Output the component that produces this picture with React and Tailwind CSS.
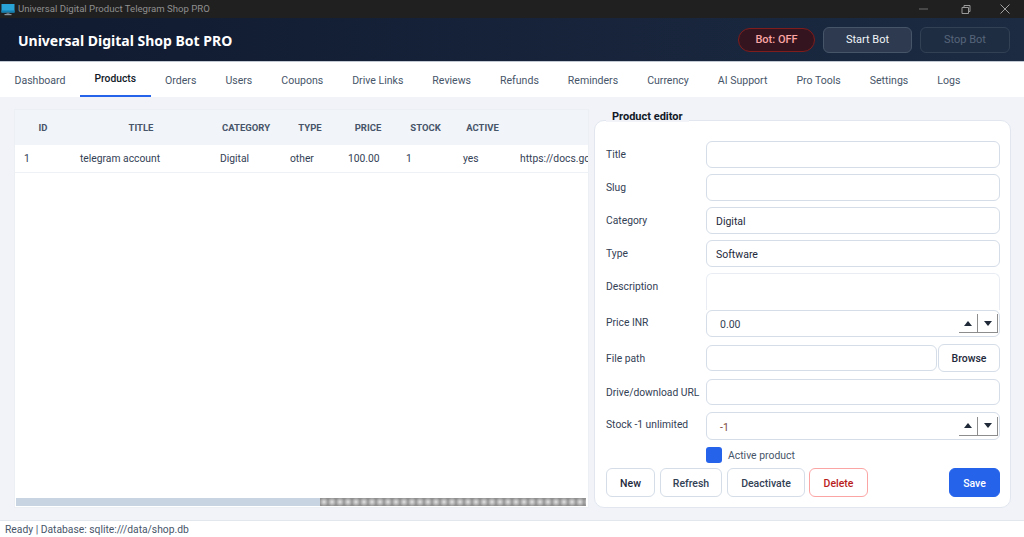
import React from "react";

const tabs = ["Dashboard","Products","Orders","Users","Coupons","Drive Links","Reviews","Refunds","Reminders","Currency","AI Support","Pro Tools","Settings","Logs"];
const cols = ["ID","TITLE","CATEGORY","TYPE","PRICE","STOCK","ACTIVE",""];
const cells = ["1","telegram account","Digital","other","100.00","1","yes","https://docs.google.com/"];
const gridCols = "grid grid-cols-[56px_140px_70px_58px_58px_57px_57px_200px] w-[696px]";

function Monitor() {
  return (
    <svg width="14" height="13" viewBox="0 0 14 13" className="ml-[1px]">
      <rect x="0.5" y="1" width="13" height="8.5" fill="#29a3d6" />
      <rect x="0.5" y="7.5" width="13" height="2" fill="#157fb0" />
      <rect x="5.5" y="9.5" width="3" height="2" fill="#5d6b75" />
      <rect x="3.5" y="11" width="7" height="1.2" fill="#8a969e" />
    </svg>
  );
}

function Tab({ label, active }) {
  return active ? (
    <div className="h-full px-[14.5px] flex items-center border-b-2 border-[#2563eb] text-[#111827] font-medium pt-[1px] text-[10.3px] whitespace-nowrap">{label}</div>
  ) : (
    <div className="h-full px-[14.5px] flex items-center text-[#475569] pt-[2px] whitespace-nowrap">{label}</div>
  );
}

function Field({ label, h = "h-[27px]", mb = "mb-[6px]", labelMt = "", children }) {
  return (
    <div className={`flex ${h} ${mb}`}>
      <div className={`w-[100px] shrink-0 text-[#334155] text-[10.3px] leading-[28px] whitespace-nowrap ${labelMt}`}>{label}</div>
      <div className="flex-1 min-w-0">{children}</div>
    </div>
  );
}

function Input({ value = "", cls = "" }) {
  return (
    <div className={`h-full border border-[#d5dde8] rounded-[6px] bg-white px-[9px] pt-[2px] flex items-center text-[10.5px] text-[#1e293b] ${cls}`}>{value}</div>
  );
}

function Spin({ value, vCls = "" }) {
  return (
    <div className="h-full border border-[#d5dde8] rounded-[6px] bg-white pl-[13px] pr-[1px] flex items-center text-[10.5px] text-[#334155]">
      <span className={`flex-1 pt-[3px] ${vCls}`}>{value}</span>
      <div className="flex h-[19px] w-[39px] border-b border-r border-[#8d8d8d]">
        <div className="w-[19px] flex items-center justify-center border-r border-[#8d8d8d]">
          <svg width="8" height="5" viewBox="0 0 8 5"><path d="M4 0 L8 5 L0 5 Z" fill="#1f2937" /></svg>
        </div>
        <div className="flex-1 flex items-center justify-center">
          <svg width="8" height="5" viewBox="0 0 8 5"><path d="M0 0 L8 0 L4 5 Z" fill="#1f2937" /></svg>
        </div>
      </div>
    </div>
  );
}

function Btn({ children, cls = "" }) {
  return (
    <div className={`h-[29px] border rounded-[6px] pt-[2px] flex items-center justify-center text-[10.5px] font-medium ${cls}`}>{children}</div>
  );
}

export default function App() {
  return (
    <div className="w-[1024px] h-[537px] overflow-hidden flex flex-col bg-[#f1f3f8] font-['Roboto','Noto_Sans',sans-serif]">
      <div className="h-[18px] bg-[#202020] flex items-center shrink-0">
        <Monitor />
        <span className="ml-[3px] pt-[1px] text-[9.6px] text-[#8f8f8f]">Universal Digital Product Telegram Shop PRO</span>
        <div className="ml-auto flex items-center">
          <svg width="12" height="12" viewBox="0 0 12 12" className="mr-[30px]"><path d="M1 6h9" stroke="#6f6f6f" /></svg>
          <svg width="12" height="12" viewBox="0 0 12 12" className="mr-[27px]"><path d="M2 4.5h6.5v6H2z M4 4.5V2.5h6v6H8.5" stroke="#9a9a9a" fill="none" /></svg>
          <svg width="12" height="12" viewBox="0 0 12 12" className="mr-[13px]"><path d="M1.5 1.5l9 9M10.5 1.5l-9 9" stroke="#a0a0a0" /></svg>
        </div>
      </div>

      <div className="h-[44px] shrink-0 bg-gradient-to-r from-[#101a30] to-[#1c2b42] border-b border-[#c3c9d2] flex items-center pl-[18px] pr-[14px]">
        <div className="pt-[2px] text-[14px] font-bold text-white font-['Noto_Sans',sans-serif]">Universal Digital Shop Bot PRO</div>
        <div className="ml-auto flex items-center">
          <div className="w-[77px] h-[24px] pt-[2px] rounded-full bg-[#34151f] border border-[#7f1d1d] text-[#fca5a5] text-[11px] font-medium flex items-center justify-center">Bot: OFF</div>
          <div className="ml-[8px] w-[89px] h-[26px] pt-[2px] rounded-[6px] bg-[#2d3a4f] border border-[#475569] text-[#f1f5f9] text-[11px] font-normal flex items-center justify-center">Start Bot</div>
          <div className="ml-[8px] w-[90px] h-[26px] pt-[2px] rounded-[6px] bg-[#1f2d42] border border-[#334155] text-[#56657a] text-[11px] font-normal flex items-center justify-center">Stop Bot</div>
        </div>
      </div>

      <div className="h-[35px] shrink-0 bg-white flex text-[10.55px]">
        {tabs.map((t) => <Tab key={t} label={t} active={t === "Products"} />)}
      </div>

      <div className="flex-1 min-h-0 flex pl-[14px] pr-[13px] pt-[12px] pb-[12px]">
        <div className="w-[575px] shrink-0 flex flex-col bg-white border border-[#eceff4] overflow-hidden">
          <div className={`${gridCols} h-[35px] bg-[#f1f4f9] items-center text-[9.5px] font-bold text-[#475569] pt-[1px] shrink-0`}>
            {cols.map((c, i) => <div key={i} className="text-center">{c}</div>)}
          </div>
          <div className={`${gridCols} h-[28px] bg-white border-b border-[#eef1f5] items-center text-[10.3px] text-[#334155] shrink-0`}>
            {cells.map((c, i) => <div key={i} className="pl-[9px] whitespace-nowrap">{c}</div>)}
          </div>
          <div className="flex-1" />
          <div className="h-[8px] ml-[1px] mr-[2px] mb-[1px] flex shrink-0">
            <div className="w-[304px] bg-[#c9d4e2]" />
            <div className="flex-1 bg-[radial-gradient(circle,#d8d8d8_10%,#8f8f8f_80%)] bg-[length:8px_8px]" />
          </div>
        </div>

        <div className="ml-[5px] flex-1 min-w-0 relative mt-[11px]">
          <div className="absolute left-[12px] -top-[11px] px-[6px] h-[13px] pt-[1px] bg-[#f1f3f8] text-[11px] font-bold text-[#111827] leading-[14px] z-10">Product editor</div>
          <div className="h-full bg-white border border-[#e2e7ef] rounded-[10px] pt-[20px] pl-[11px] pr-[10px]">
            <Field label="Title"><Input /></Field>
            <Field label="Slug"><Input /></Field>
            <Field label="Category"><Input value="Digital" /></Field>
            <Field label="Type"><Input value="Software" /></Field>
            <Field label="Description" h="h-[37px]" mb="">
              <div className="h-full border border-b-0 border-[#e9edf3] rounded-t-[6px] bg-white" />
            </Field>
            <Field label="Price INR" mb="mb-[8px]" labelMt="-mt-[1px]"><Spin value="0.00" /></Field>
            <Field label="File path" h="h-[26px]" mb="mb-[8px]">
              <div className="flex h-full">
                <Input cls="flex-1" />
                <div className="w-[62px] h-[28px] -mt-[1px] pt-[2px] ml-[1px] border border-[#d5dde8] rounded-[6px] bg-white text-[10.5px] font-medium text-[#1e293b] flex items-center justify-center">Browse</div>
              </div>
            </Field>
            <Field label="Drive/download URL" h="h-[26px]" mb="mb-[7px]"><Input /></Field>
            <Field label="Stock -1 unlimited" h="h-[28px]" mb="mb-[7px]" labelMt="-mt-[1px]"><Spin value="-1" vCls="text-[#7c4a3a]" /></Field>
            <div className="flex items-center h-[16px] pl-[100px] mb-[5px]">
              <div className="w-[16px] h-[16px] rounded-[3px] bg-[#2563eb]" />
              <span className="ml-[6px] pt-[2px] text-[10.4px] text-[#475569]">Active product</span>
            </div>
            <div className="flex">
              <Btn cls="w-[49px] border-[#d5dde8] text-[#1e293b]">New</Btn>
              <Btn cls="ml-[5px] w-[62px] border-[#d5dde8] text-[#334155]">Refresh</Btn>
              <Btn cls="ml-[5px] w-[78px] border-[#d5dde8] text-[#334155]">Deactivate</Btn>
              <Btn cls="ml-[4px] w-[59px] border-[#fca5a5] text-[#b91c1c] font-bold">Delete</Btn>
              <Btn cls="ml-auto w-[51px] bg-[#2563eb] border-[#2563eb] text-white font-bold">Save</Btn>
            </div>
          </div>
        </div>
      </div>

      <div className="h-[17px] shrink-0 bg-white border-t border-[#e2e6ed] pl-[5px] pt-[2px] flex items-center text-[10.3px] text-[#475569]">Ready | Database: sqlite:///data/shop.db</div>
    </div>
  );
}
